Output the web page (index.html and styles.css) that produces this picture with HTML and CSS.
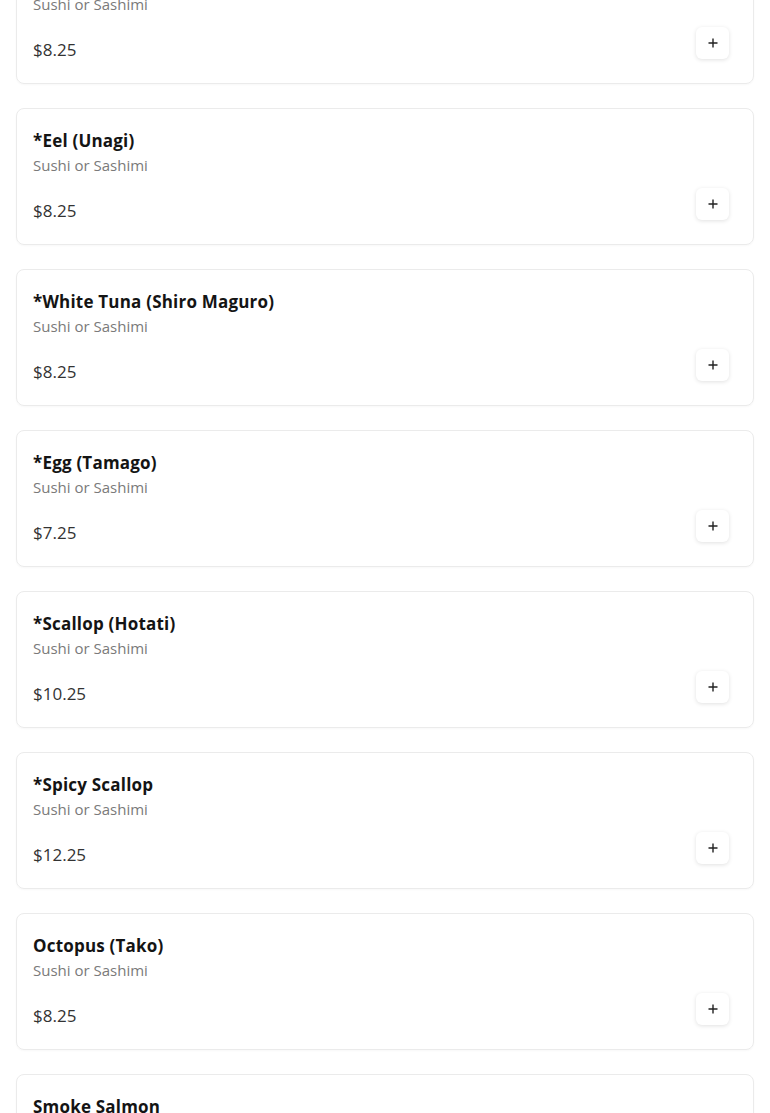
FILE: index.html
```html
<!DOCTYPE html>
<html>
<head>
<meta charset="utf-8">
<link rel="stylesheet" href="styles.css">
</head>
<body>
<div class="list">
  <div class="card"><div class="info"><div class="title">*Yellowtail (Hamachi)</div><div class="sub">Sushi or Sashimi</div><div class="price">$8.25</div></div><button class="add"><svg viewBox="0 0 12 12" width="12" height="12"><path d="M6 1.5v9M1.5 6h9" stroke="#222" stroke-width="1.4" fill="none"/></svg></button></div>
  <div class="card"><div class="info"><div class="title">*Eel (Unagi)</div><div class="sub">Sushi or Sashimi</div><div class="price">$8.25</div></div><button class="add"><svg viewBox="0 0 12 12" width="12" height="12"><path d="M6 1.5v9M1.5 6h9" stroke="#222" stroke-width="1.4" fill="none"/></svg></button></div>
  <div class="card"><div class="info"><div class="title">*White Tuna (Shiro Maguro)</div><div class="sub">Sushi or Sashimi</div><div class="price">$8.25</div></div><button class="add"><svg viewBox="0 0 12 12" width="12" height="12"><path d="M6 1.5v9M1.5 6h9" stroke="#222" stroke-width="1.4" fill="none"/></svg></button></div>
  <div class="card"><div class="info"><div class="title">*Egg (Tamago)</div><div class="sub">Sushi or Sashimi</div><div class="price">$7.25</div></div><button class="add"><svg viewBox="0 0 12 12" width="12" height="12"><path d="M6 1.5v9M1.5 6h9" stroke="#222" stroke-width="1.4" fill="none"/></svg></button></div>
  <div class="card"><div class="info"><div class="title">*Scallop (Hotati)</div><div class="sub">Sushi or Sashimi</div><div class="price">$10.25</div></div><button class="add"><svg viewBox="0 0 12 12" width="12" height="12"><path d="M6 1.5v9M1.5 6h9" stroke="#222" stroke-width="1.4" fill="none"/></svg></button></div>
  <div class="card"><div class="info"><div class="title">*Spicy Scallop</div><div class="sub">Sushi or Sashimi</div><div class="price">$12.25</div></div><button class="add"><svg viewBox="0 0 12 12" width="12" height="12"><path d="M6 1.5v9M1.5 6h9" stroke="#222" stroke-width="1.4" fill="none"/></svg></button></div>
  <div class="card"><div class="info"><div class="title">Octopus (Tako)</div><div class="sub">Sushi or Sashimi</div><div class="price">$8.25</div></div><button class="add"><svg viewBox="0 0 12 12" width="12" height="12"><path d="M6 1.5v9M1.5 6h9" stroke="#222" stroke-width="1.4" fill="none"/></svg></button></div>
  <div class="card"><div class="info"><div class="title">Smoke Salmon</div><div class="sub">Sushi or Sashimi</div><div class="price">$8.25</div></div><button class="add"><svg viewBox="0 0 12 12" width="12" height="12"><path d="M6 1.5v9M1.5 6h9" stroke="#222" stroke-width="1.4" fill="none"/></svg></button></div>
</div>
</body>
</html>
```
FILE: styles.css
```css
html, body {
  margin: 0;
  padding: 0;
  background: #fff;
  overflow: hidden;
}
body {
  font-family: "Open Sans", "Liberation Sans", sans-serif;
  color: #222;
}
.list {
  display: flex;
  flex-direction: column;
  gap: 24px;
  padding: 0 16px;
  margin-top: -53px;
}
.card {
  display: flex;
  justify-content: space-between;
  border: 1px solid #ebebeb;
  border-radius: 8px;
  padding: 20px 16px 20px;
  height: 137px;
  box-sizing: border-box;
  box-shadow: 0 1px 2px rgba(0,0,0,0.03);
}
.info {
  display: flex;
  flex-direction: column;
}
.title {
  font-size: 17px;
  font-weight: 700;
  line-height: 24px;
  color: #141414;
  letter-spacing: 0.2px;
}
.sub {
  margin-top: 2px;
  font-size: 15px;
  line-height: 20px;
  color: #7a7a7a;
}
.price {
  margin-top: 24px;
  font-size: 17px;
  line-height: 24px;
  color: #333;
}
.add {
  align-self: flex-end;
  margin: 0 8px 4px 0;
  width: 33px;
  height: 32px;
  border: none;
  border-radius: 6px;
  background: #fff;
  box-shadow: 0 1px 4px rgba(0,0,0,0.12);
  display: flex;
  align-items: center;
  justify-content: center;
  padding: 0;
}
```
